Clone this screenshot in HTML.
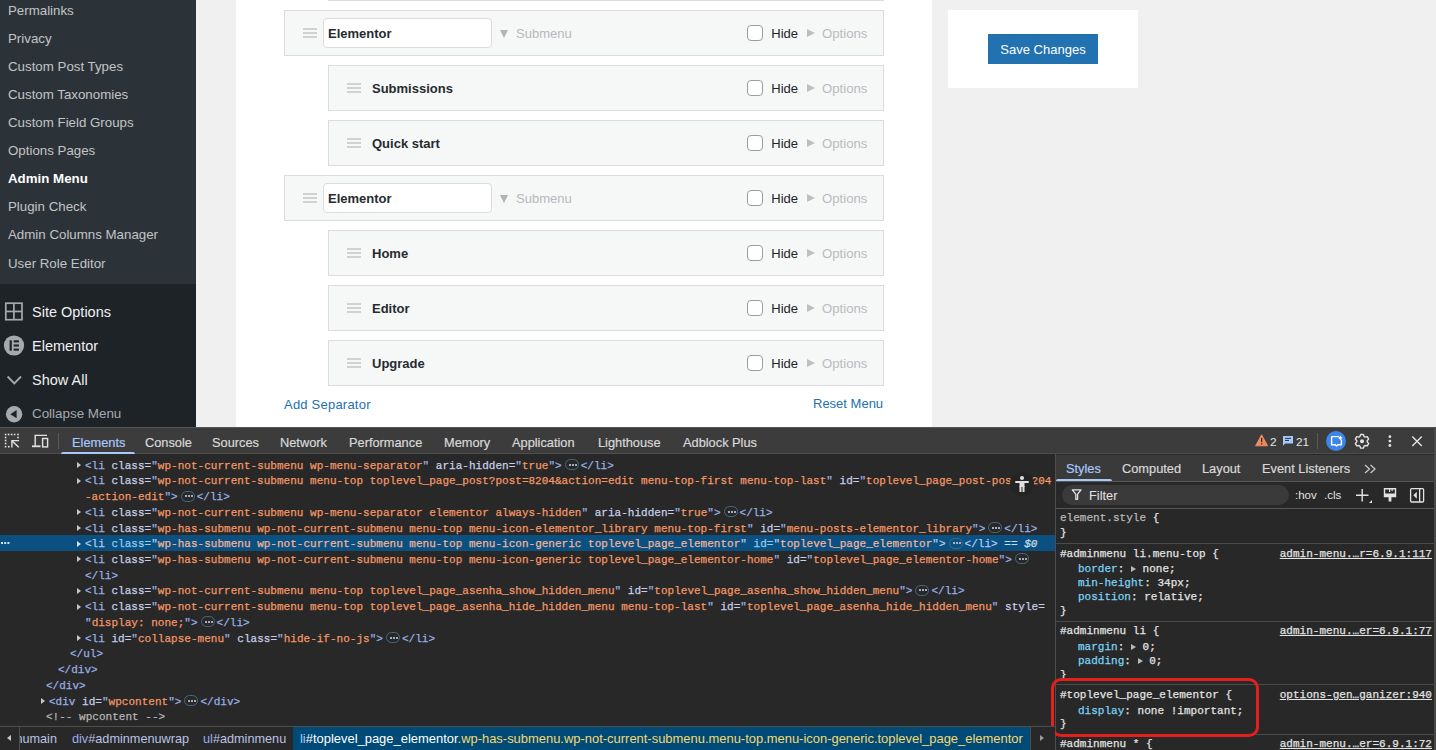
<!DOCTYPE html><html><head><meta charset="utf-8"><style>
*{margin:0;padding:0;box-sizing:border-box}
html,body{width:1436px;height:750px;overflow:hidden;background:#f0f0f1;font-family:"Liberation Sans",sans-serif}
.a{position:absolute;white-space:nowrap}
.sm{position:absolute;left:8px;font-size:13.3px;color:#c3c4c7;line-height:16px;white-space:nowrap}
.sm.cur{color:#fff;font-weight:bold}
.tl{position:absolute;left:32px;font-size:14.5px;color:#f0f0f1;line-height:18px;white-space:nowrap}
.item{position:absolute;height:46px;background:#f6f7f7;border:1px solid #dcdcde}
.handle{position:absolute;top:17px;width:14px;height:10px;border-top:2px solid #d0d1d3;border-bottom:2px solid #d0d1d3}
.handle:after{content:"";position:absolute;left:0;right:0;top:2px;height:2px;background:#d0d1d3}
.name{position:absolute;top:15px;font-size:13px;font-weight:bold;color:#262b30;white-space:nowrap;line-height:16px}
.inp{position:absolute;left:38px;top:7px;width:169px;height:30px;background:#fff;border:1px solid #dcdcde;border-radius:4px}
.inp span{position:absolute;left:4px;top:7px;font-size:13px;font-weight:bold;color:#262b30;line-height:16px}
.sub{position:absolute;top:15px;font-size:13px;color:#b7b9bc;white-space:nowrap;line-height:16px}
.stri{position:absolute;top:18.5px;width:0;height:0;border-top:8px solid #b0b2b4;border-left:4.3px solid transparent;border-right:4.3px solid transparent}
.cb{position:absolute;top:14px;width:16px;height:16px;border:1px solid #9a9ca0;border-radius:4px;background:#fff}
.hide{position:absolute;top:15px;font-size:13px;color:#1d2327;line-height:16px}
.tri{position:absolute;top:18px;width:0;height:0;border-left:8px solid #bdbfc1;border-top:4.2px solid transparent;border-bottom:4.2px solid transparent}
.opt{position:absolute;top:15px;font-size:13.2px;color:#b9bbbe;line-height:16px}
/* devtools */
#dt{position:absolute;left:0;top:427px;width:1436px;height:323px;background:#282828}
.mono{font-family:"Liberation Mono",monospace;font-size:11px}
.ln{position:absolute;white-space:pre;font-family:"Liberation Mono",monospace;font-size:11px;line-height:15.6px;height:15.6px;letter-spacing:0.018px;-webkit-text-stroke:0.25px currentColor}
.tg{color:#98afe4}
.an{color:#c8cfe8}
.av{color:#f29766}
.cm{color:#b4b4b4}
.arr{position:absolute;width:0;height:0;border-left:4.5px solid #c8c8c8;border-top:3.5px solid transparent;border-bottom:3.5px solid transparent}
.ell{display:inline-block;vertical-align:middle;position:relative;top:-1px;width:14px;height:11px;border:1px solid #466a80;border-radius:6px;margin:0 2px 0 3px}
.ell:before{content:"";position:absolute;left:3px;top:3.5px;width:2px;height:2px;background:#d0d8e8;box-shadow:3px 0 0 #d0d8e8,6px 0 0 #d0d8e8;border-radius:1px}
.tab{position:absolute;top:0;line-height:26px;padding-top:1.6px;font-size:12.8px;color:#d8d8d8;white-space:nowrap;-webkit-text-stroke:0.2px currentColor}
.sp{color:#9cdcfe}
.hl .tg{color:#b0c8f0}
.hl .an{color:#90cbf5}
.hl .av{color:#f0b49a}
.hl .arr2{}
.stri2{display:inline-block;width:5px;height:8px;position:relative;vertical-align:middle;top:0px}
.stri2:before{content:'';position:absolute;left:0px;top:1.5px;border-left:5px solid #b8b8b8;border-top:3.5px solid transparent;border-bottom:3.5px solid transparent}
</style></head><body>
<div class="a" style="left:0;top:0;width:196px;height:284px;background:#2c3338"></div>
<div class="a" style="left:0;top:284px;width:196px;height:143px;background:#1d2327"></div>
<div class="sm" style="top:2.6px">Permalinks</div>
<div class="sm" style="top:30.7px">Privacy</div>
<div class="sm" style="top:58.8px">Custom Post Types</div>
<div class="sm" style="top:86.9px">Custom Taxonomies</div>
<div class="sm" style="top:115.0px">Custom Field Groups</div>
<div class="sm" style="top:143.1px">Options Pages</div>
<div class="sm cur" style="top:171.2px">Admin Menu</div>
<div class="sm" style="top:199.3px">Plugin Check</div>
<div class="sm" style="top:227.4px">Admin Columns Manager</div>
<div class="sm" style="top:255.5px">User Role Editor</div>
<div class="tl" style="top:303.0px">Site Options</div>
<div class="tl" style="top:336.7px">Elementor</div>
<div class="tl" style="top:371.0px">Show All</div>
<div class="tl" style="top:405px;color:#a7aaad;font-size:13.4px">Collapse Menu</div>
<svg class="a" style="left:0;top:290px" width="40" height="140" viewBox="0 290 40 140"><g fill="none" stroke="#a7aaad" stroke-width="1.7"><rect x="5.8" y="303.2" width="16.2" height="16.5"/><line x1="13.9" y1="303" x2="13.9" y2="320"/><line x1="5.8" y1="311.45" x2="22" y2="311.45"/></g><circle cx="14" cy="345.5" r="10.1" fill="#a7aaad"/><g fill="#1d2327"><rect x="9.6" y="340.3" width="2.2" height="10.4"/><rect x="13.7" y="340.3" width="5.2" height="2.1"/><rect x="13.7" y="344.45" width="5.2" height="2.1"/><rect x="13.7" y="348.6" width="5.2" height="2.1"/></g><polyline points="7.6,376.5 14.3,383.4 21,376.5" fill="none" stroke="#a7aaad" stroke-width="1.8"/><circle cx="14.1" cy="414.2" r="8.2" fill="#a7aaad"/><polygon points="10.3,414.2 16.6,410.1 16.6,418.3" fill="#1d2327"/></svg>
<div class="a" style="left:236px;top:0;width:696px;height:427px;background:#fff"></div>
<div class="a" style="left:328px;top:-45px;width:556px;height:46px;background:#f6f7f7;border:1px solid #dcdcde"></div>
<div class="item" style="left:284px;top:10px;width:600px">
<div class="handle" style="left:18px"></div>
<div class="inp"><span>Elementor</span></div>
<div class="stri" style="left:215px"></div>
<div class="sub" style="left:231px">Submenu</div>
<div class="cb" style="left:462px"></div>
<div class="hide" style="left:486.29999999999995px">Hide</div>
<div class="tri" style="left:521.5px"></div>
<div class="opt" style="left:537px">Options</div>
</div>
<div class="item" style="left:328px;top:65px;width:556px">
<div class="handle" style="left:18px"></div>
<div class="name" style="left:43px">Submissions</div>
<div class="cb" style="left:418px"></div>
<div class="hide" style="left:442.29999999999995px">Hide</div>
<div class="tri" style="left:477.5px"></div>
<div class="opt" style="left:493px">Options</div>
</div>
<div class="item" style="left:328px;top:120px;width:556px">
<div class="handle" style="left:18px"></div>
<div class="name" style="left:43px">Quick start</div>
<div class="cb" style="left:418px"></div>
<div class="hide" style="left:442.29999999999995px">Hide</div>
<div class="tri" style="left:477.5px"></div>
<div class="opt" style="left:493px">Options</div>
</div>
<div class="item" style="left:284px;top:175px;width:600px">
<div class="handle" style="left:18px"></div>
<div class="inp"><span>Elementor</span></div>
<div class="stri" style="left:215px"></div>
<div class="sub" style="left:231px">Submenu</div>
<div class="cb" style="left:462px"></div>
<div class="hide" style="left:486.29999999999995px">Hide</div>
<div class="tri" style="left:521.5px"></div>
<div class="opt" style="left:537px">Options</div>
</div>
<div class="item" style="left:328px;top:230px;width:556px">
<div class="handle" style="left:18px"></div>
<div class="name" style="left:43px">Home</div>
<div class="cb" style="left:418px"></div>
<div class="hide" style="left:442.29999999999995px">Hide</div>
<div class="tri" style="left:477.5px"></div>
<div class="opt" style="left:493px">Options</div>
</div>
<div class="item" style="left:328px;top:285px;width:556px">
<div class="handle" style="left:18px"></div>
<div class="name" style="left:43px">Editor</div>
<div class="cb" style="left:418px"></div>
<div class="hide" style="left:442.29999999999995px">Hide</div>
<div class="tri" style="left:477.5px"></div>
<div class="opt" style="left:493px">Options</div>
</div>
<div class="item" style="left:328px;top:340px;width:556px">
<div class="handle" style="left:18px"></div>
<div class="name" style="left:43px">Upgrade</div>
<div class="cb" style="left:418px"></div>
<div class="hide" style="left:442.29999999999995px">Hide</div>
<div class="tri" style="left:477.5px"></div>
<div class="opt" style="left:493px">Options</div>
</div>
<div class="a" style="left:948px;top:10px;width:190px;height:78px;background:#fff"></div>
<div class="a" style="left:988px;top:34px;width:110px;height:30px;background:#2271b1;color:#fff;font-size:13px;line-height:32px;text-align:center">Save Changes</div>
<div class="a" style="left:284px;top:397px;font-size:13px;color:#2271b1;line-height:16px;letter-spacing:0.22px">Add Separator</div>
<div class="a" style="left:813px;top:396px;font-size:13px;color:#2271b1;line-height:16px">Reset Menu</div>
<div id="dt"></div>
<div class="a" style="left:0;top:427px;width:1436px;height:27px;background:#3c3c3c;border-top:1px solid #555;border-bottom:1px solid #4e4e4e"></div>
<div class="tab" style="left:72px;top:428px;color:#a8c7fa">Elements</div>
<div class="tab" style="left:145px;top:428px;color:#d8d8d8">Console</div>
<div class="tab" style="left:212px;top:428px;color:#d8d8d8">Sources</div>
<div class="tab" style="left:280px;top:428px;color:#d8d8d8">Network</div>
<div class="tab" style="left:349px;top:428px;color:#d8d8d8">Performance</div>
<div class="tab" style="left:444px;top:428px;color:#d8d8d8">Memory</div>
<div class="tab" style="left:512px;top:428px;color:#d8d8d8">Application</div>
<div class="tab" style="left:598px;top:428px;color:#d8d8d8">Lighthouse</div>
<div class="tab" style="left:683px;top:428px;color:#d8d8d8">Adblock Plus</div>
<div class="a" style="left:61px;top:451.5px;width:74px;height:2.5px;background:#a8c7fa;border-radius:2px 2px 0 0"></div>
<div class="a" style="left:58px;top:433px;width:1px;height:16px;background:#5a5a5a"></div>
<div class="a" style="left:1317px;top:433px;width:1px;height:16px;background:#5a5a5a"></div>
<div class="a" style="left:0;top:535px;width:1055px;height:16px;background:#0a5080"></div>
<div class="a" style="left:0.5px;top:541.8px;width:2.2px;height:2.2px;background:#d0e4f8;box-shadow:3.2px 0 0 #d0e4f8,6.4px 0 0 #d0e4f8"></div>
<div class="arr" style="left:77px;top:461.8px;border-left-color:#c8c8c8"></div>
<div class="ln " style="left:85px;top:458.5px"><span class="tg">&lt;li</span> <span class="an">class</span><span class="an">=</span><span class="tg">&quot;</span><span class="av">wp-not-current-submenu wp-menu-separator</span><span class="tg">&quot;</span> <span class="an">aria-hidden</span><span class="an">=</span><span class="tg">&quot;</span><span class="av">true</span><span class="tg">&quot;</span><span class="tg">&gt;</span><span class="ell"></span><span class="tg">&lt;/li&gt;</span></div>
<div class="arr" style="left:77px;top:477.5px;border-left-color:#c8c8c8"></div>
<div class="ln " style="left:85px;top:474.2px"><span class="tg">&lt;li</span> <span class="an">class=</span><span class="tg">&quot;</span><span class="av">wp-not-current-submenu menu-top toplevel_page_post?post=8204&amp;action=edit menu-top-first menu-top-last</span><span class="tg">&quot;</span> <span class="an">id=</span><span class="tg">&quot;</span><span class="av">toplevel_page_post-post=8204</span></div>
<div class="ln " style="left:85px;top:490.0px"><span class="av">-action-edit</span><span class="tg">&quot;&gt;</span><span class="ell"></span><span class="tg">&lt;/li&gt;</span></div>
<div class="arr" style="left:77px;top:509.0px;border-left-color:#c8c8c8"></div>
<div class="ln " style="left:85px;top:505.7px"><span class="tg">&lt;li</span> <span class="an">class</span><span class="an">=</span><span class="tg">&quot;</span><span class="av">wp-not-current-submenu wp-menu-separator elementor always-hidden</span><span class="tg">&quot;</span> <span class="an">aria-hidden</span><span class="an">=</span><span class="tg">&quot;</span><span class="av">true</span><span class="tg">&quot;</span><span class="tg">&gt;</span><span class="ell"></span><span class="tg">&lt;/li&gt;</span></div>
<div class="arr" style="left:77px;top:524.8px;border-left-color:#c8c8c8"></div>
<div class="ln " style="left:85px;top:521.5px"><span class="tg">&lt;li</span> <span class="an">class</span><span class="an">=</span><span class="tg">&quot;</span><span class="av">wp-has-submenu wp-not-current-submenu menu-top menu-icon-elementor_library menu-top-first</span><span class="tg">&quot;</span> <span class="an">id</span><span class="an">=</span><span class="tg">&quot;</span><span class="av">menu-posts-elementor_library</span><span class="tg">&quot;</span><span class="tg">&gt;</span><span class="ell"></span><span class="tg">&lt;/li&gt;</span></div>
<div class="arr" style="left:77px;top:540.5px;border-left-color:#cfe0f0"></div>
<div class="ln hl" style="left:85px;top:537.2px"><span class="tg">&lt;li</span> <span class="an">class</span><span class="an">=</span><span class="tg">&quot;</span><span class="av">wp-has-submenu wp-not-current-submenu menu-top menu-icon-generic toplevel_page_elementor</span><span class="tg">&quot;</span> <span class="an">id</span><span class="an">=</span><span class="tg">&quot;</span><span class="av">toplevel_page_elementor</span><span class="tg">&quot;</span><span class="tg">&gt;</span><span class="ell"></span><span class="tg">&lt;/li&gt;</span><span style="color:#c8d8e8"> == <i>$0</i></span></div>
<div class="arr" style="left:77px;top:556.2px;border-left-color:#c8c8c8"></div>
<div class="ln " style="left:85px;top:552.9px"><span class="tg">&lt;li</span> <span class="an">class</span><span class="an">=</span><span class="tg">&quot;</span><span class="av">wp-has-submenu wp-not-current-submenu menu-top menu-icon-generic toplevel_page_elementor-home</span><span class="tg">&quot;</span> <span class="an">id</span><span class="an">=</span><span class="tg">&quot;</span><span class="av">toplevel_page_elementor-home</span><span class="tg">&quot;</span><span class="tg">&gt;</span><span class="ell"></span></div>
<div class="ln " style="left:85px;top:568.7px"><span class="tg">&lt;/li&gt;</span></div>
<div class="arr" style="left:77px;top:587.7px;border-left-color:#c8c8c8"></div>
<div class="ln " style="left:85px;top:584.4px"><span class="tg">&lt;li</span> <span class="an">class</span><span class="an">=</span><span class="tg">&quot;</span><span class="av">wp-not-current-submenu menu-top toplevel_page_asenha_show_hidden_menu</span><span class="tg">&quot;</span> <span class="an">id</span><span class="an">=</span><span class="tg">&quot;</span><span class="av">toplevel_page_asenha_show_hidden_menu</span><span class="tg">&quot;</span><span class="tg">&gt;</span><span class="ell"></span><span class="tg">&lt;/li&gt;</span></div>
<div class="arr" style="left:77px;top:603.5px;border-left-color:#c8c8c8"></div>
<div class="ln " style="left:85px;top:600.2px"><span class="tg">&lt;li</span> <span class="an">class=</span><span class="tg">&quot;</span><span class="av">wp-not-current-submenu menu-top toplevel_page_asenha_hide_hidden_menu menu-top-last</span><span class="tg">&quot;</span> <span class="an">id=</span><span class="tg">&quot;</span><span class="av">toplevel_page_asenha_hide_hidden_menu</span><span class="tg">&quot;</span> <span class="an">style=</span></div>
<div class="ln " style="left:85px;top:615.9px"><span class="tg">&quot;</span><span class="av">display: none;</span><span class="tg">&quot;&gt;</span><span class="ell"></span><span class="tg">&lt;/li&gt;</span></div>
<div class="arr" style="left:77px;top:634.9px;border-left-color:#c8c8c8"></div>
<div class="ln " style="left:85px;top:631.6px"><span class="tg">&lt;li</span> <span class="an">id</span><span class="an">=</span><span class="tg">&quot;</span><span class="av">collapse-menu</span><span class="tg">&quot;</span> <span class="an">class</span><span class="an">=</span><span class="tg">&quot;</span><span class="av">hide-if-no-js</span><span class="tg">&quot;</span><span class="tg">&gt;</span><span class="ell"></span><span class="tg">&lt;/li&gt;</span></div>
<div class="ln " style="left:70px;top:647.4px"><span class="tg">&lt;/ul&gt;</span></div>
<div class="ln " style="left:58px;top:663.1px"><span class="tg">&lt;/div&gt;</span></div>
<div class="ln " style="left:46px;top:678.9px"><span class="tg">&lt;/div&gt;</span></div>
<div class="arr" style="left:41px;top:697.9px;border-left-color:#c8c8c8"></div>
<div class="ln " style="left:49px;top:694.6px"><span class="tg">&lt;div</span> <span class="an">id=</span><span class="tg">&quot;</span><span class="av">wpcontent</span><span class="tg">&quot;&gt;</span><span class="ell"></span><span class="tg">&lt;/div&gt;</span></div>
<div class="ln " style="left:46px;top:710.3px"><span class="cm">&lt;!-- wpcontent --&gt;</span></div>
<div class="a" style="left:1010px;top:472px;width:24px;height:24px;border-radius:12px;background:#242424"></div>
<svg class="a" style="left:1013px;top:475px" width="18" height="18" viewBox="0 0 18 18"><g fill="#e0e0e0"><circle cx="9" cy="3" r="2"/><rect x="2" y="6" width="14" height="2" rx="1"/><rect x="6.5" y="6" width="5" height="6"/><rect x="6.5" y="11" width="2" height="6"/><rect x="9.5" y="11" width="2" height="6"/></g></svg>
<div class="a" style="left:1055px;top:454px;width:1px;height:296px;background:#4e4e4e"></div>
<div class="a" style="left:1056px;top:455px;width:380px;height:27px;background:#3a3a3a"></div>
<div class="tab" style="left:1066px;top:456.4px;padding-top:0;color:#a8c7fa">Styles</div>
<div class="tab" style="left:1122px;top:456.4px;padding-top:0;color:#d8d8d8">Computed</div>
<div class="tab" style="left:1202px;top:456.4px;padding-top:0;color:#d8d8d8">Layout</div>
<div class="tab" style="left:1262px;top:456.4px;padding-top:0;color:#d8d8d8">Event Listeners</div>
<div class="a" style="left:1056px;top:479px;width:56px;height:3px;background:#a8c7fa;border-radius:2px 2px 0 0"></div>
<div class="a" style="left:1056px;top:481px;width:380px;height:28px;background:#282828;border-top:1px solid #575757;border-bottom:1px solid #575757"></div>
<div class="a" style="left:1061.5px;top:485px;width:227px;height:20px;background:#3a3a3a;border-radius:10px"></div>
<div class="a" style="left:1089px;top:487px;font-size:12.8px;line-height:17px;color:#e3e3e3">Filter</div>
<div class="a" style="left:1295px;top:487px;font-size:11.5px;line-height:17px;color:#e3e3e3">:hov</div>
<div class="a" style="left:1324px;top:487px;font-size:11.5px;line-height:17px;color:#e3e3e3">.cls</div>
<div class="ln" style="left:1060px;top:511.0px;color:#e3e3e3"><span style="color:#b8b8b8">element.style</span> {</div>
<div class="ln" style="left:1060px;top:525.5px;color:#e3e3e3">}</div>
<div class="a" style="left:1056px;top:543px;width:380px;height:1px;background:#4a4a4a"></div>
<div class="ln" style="left:1060px;top:546.5px;color:#e3e3e3">#adminmenu li.menu-top {</div>
<div class="ln" style="left:1078px;top:561.5px;color:#e3e3e3"><span style="color:#7cd4f5">border</span>: <span class="stri2"></span> none;</div>
<div class="ln" style="left:1078px;top:575.5px;color:#e3e3e3"><span style="color:#7cd4f5">min-height</span>: 34px;</div>
<div class="ln" style="left:1078px;top:589.5px;color:#e3e3e3"><span style="color:#7cd4f5">position</span>: relative;</div>
<div class="ln" style="left:1060px;top:603.5px;color:#e3e3e3">}</div>
<div class="a" style="left:1056px;top:621px;width:380px;height:1px;background:#4a4a4a"></div>
<div class="ln" style="left:1060px;top:623.5px;color:#e3e3e3">#adminmenu li {</div>
<div class="ln" style="left:1078px;top:639.5px;color:#e3e3e3"><span style="color:#7cd4f5">margin</span>: <span class="stri2"></span> 0;</div>
<div class="ln" style="left:1078px;top:653.5px;color:#e3e3e3"><span style="color:#7cd4f5">padding</span>: <span class="stri2"></span> 0;</div>
<div class="ln" style="left:1060px;top:667.5px;color:#e3e3e3">}</div>
<div class="a" style="left:1056px;top:684px;width:380px;height:1px;background:#4a4a4a"></div>
<div class="ln" style="left:1060px;top:687.5px;color:#e3e3e3">#toplevel_page_elementor {</div>
<div class="ln" style="left:1078px;top:703.5px;color:#e3e3e3"><span style="color:#7cd4f5">display</span>: none !important;</div>
<div class="ln" style="left:1060px;top:716.5px;color:#e3e3e3">}</div>
<div class="a" style="left:1056px;top:734px;width:380px;height:1px;background:#4a4a4a"></div>
<div class="ln" style="left:1060px;top:736.5px;color:#e3e3e3">#adminmenu * {</div>
<div class="ln" style="right:4px;top:546.5px;color:#e3e3e3;text-decoration:underline">admin-menu.…r=6.9.1:117</div>
<div class="ln" style="right:4px;top:623.5px;color:#e3e3e3;text-decoration:underline">admin-menu.…er=6.9.1:77</div>
<div class="ln" style="right:4px;top:687.5px;color:#e3e3e3;text-decoration:underline">options-gen…ganizer:940</div>
<div class="ln" style="right:4px;top:736.5px;color:#e3e3e3;text-decoration:underline">admin-menu.…er=6.9.1:72</div>
<div class="a" style="left:1050.5px;top:678px;width:208px;height:59px;border:3.5px solid #e3201c;border-radius:10px"></div>
<div class="a" style="left:0;top:726px;width:1055px;height:24px;background:#282828;border-top:1px solid #4e4e4e"></div>
<div class="a" style="left:293px;top:727px;width:737px;height:23px;background:#004a77"></div>
<div class="a" style="left:0;top:727px;width:20px;height:23px;background:#282828;border-right:1px solid #4e4e4e;z-index:2"></div>
<div class="a" style="left:7px;top:735px;width:0;height:0;border-right:4px solid #c8c8c8;border-top:3.5px solid transparent;border-bottom:3.5px solid transparent;z-index:3"></div>
<div class="a" style="left:1030px;top:727px;width:25px;height:23px;background:#282828;border-left:1px solid #4e4e4e"></div>
<div class="a" style="left:1040px;top:735px;width:0;height:0;border-left:4px solid #9a9a9a;border-top:3.5px solid transparent;border-bottom:3.5px solid transparent"></div>
<div class="a" style="right:1379px;top:730.5px;font-size:12.7px;line-height:16px;color:#b9c3e6"><span style="color:#98afe4">div</span>#adminmenumain</div>
<div class="a" style="left:72px;top:730.5px;font-size:12.7px;line-height:16px"><span style="color:#98afe4">div</span><span style="color:#b9c3e6">#adminmenuwrap</span></div>
<div class="a" style="left:203px;top:730.5px;font-size:12.7px;line-height:16px"><span style="color:#98afe4">ul</span><span style="color:#b9c3e6">#adminmenu</span></div>
<div class="a" style="left:300px;top:731px;font-size:12.94px;line-height:16px"><span style="color:#a8c7fa">li</span><span style="color:#fff">#toplevel_page_elementor</span><span style="color:#f5d870">.wp-has-submenu.wp-not-current-submenu.menu-top.menu-icon-generic.toplevel_page_elementor</span></div>
<svg class="a" style="left:0;top:428px" width="60" height="26" viewBox="0 0 60 26"><g fill="#e3e3e3"><rect x="4.8" y="5.7" width="1.6" height="1.6"/><rect x="7.8" y="5.7" width="1.6" height="1.6"/><rect x="10.8" y="5.7" width="1.6" height="1.6"/><rect x="13.8" y="5.7" width="1.6" height="1.6"/><rect x="17.2" y="5.7" width="1.6" height="1.6"/><rect x="4.8" y="8.7" width="1.6" height="1.6"/><rect x="4.8" y="11.7" width="1.6" height="1.6"/><rect x="4.8" y="14.7" width="1.6" height="1.6"/><rect x="4.8" y="17.9" width="1.6" height="1.6"/><rect x="8.0" y="17.9" width="1.6" height="1.6"/><rect x="17.2" y="8.7" width="1.6" height="1.6"/></g><g fill="none" stroke="#e3e3e3" stroke-width="1.4"><path d="M11.9 19.5V12.6H19"/><path d="M12.2 12.9L18.7 19.3"/></g><g fill="none" stroke="#e3e3e3" stroke-width="1.4"><path d="M35.2 17.8V7.4H47"/><rect x="42.6" y="10.5" width="5" height="8.4"/></g><rect x="32" y="17.4" width="8.5" height="1.8" fill="#e3e3e3"/></svg>
<svg class="a" style="left:1250px;top:428px" width="186" height="26" viewBox="0 0 186 26"><path d="M11.6 6.8L17.6 17.8H5.6Z" fill="#ee8a5e" stroke="#ee8a5e" stroke-width="1" stroke-linejoin="round"/><rect x="11" y="10" width="1.3" height="4.2" fill="#3a2a22"/><rect x="11" y="15.2" width="1.3" height="1.3" fill="#3a2a22"/><path d="M33 8H43V15.5H35.2L33 17.8Z" fill="#a8c7fa"/><g fill="#2a3e5e"><rect x="35" y="9.8" width="6" height="1.1"/><rect x="35" y="11.9" width="4" height="1.1"/></g><circle cx="86" cy="13" r="10" fill="#3d85e6"/><path d="M81.6 8.6H88.8M91.4 11.4V16.8H87.8L86.5 18.1L85.2 16.8H81.6V8.6" fill="none" stroke="#fff" stroke-width="1.4" stroke-linejoin="round"/><path d="M90.3 7.6L91.2 9L92.6 9.9L91.2 10.8L90.3 12.2L89.4 10.8L88 9.9L89.4 9Z" fill="#fff"/></svg>
<div class="a" style="left:1270px;top:434.5px;font-size:11.8px;line-height:14px;color:#e3e3e3">2</div>
<div class="a" style="left:1296px;top:434.5px;font-size:11.8px;line-height:14px;color:#e3e3e3">21</div>
<svg class="a" style="left:0;top:0" width="1436" height="750" viewBox="0 0 1436 750" style="pointer-events:none"><polygon points="1368.64,443.53 1367.25,445.93 1365.05,445.51 1364.12,446.05 1363.39,448.16 1360.61,448.16 1359.88,446.05 1358.95,445.51 1356.75,445.93 1355.36,443.53 1356.83,441.84 1356.83,440.76 1355.36,439.07 1356.75,436.67 1358.95,437.09 1359.88,436.55 1360.61,434.44 1363.39,434.44 1364.12,436.55 1365.05,437.09 1367.25,436.67 1368.64,439.07 1367.17,440.76 1367.17,441.84" fill="none" stroke="#e3e3e3" stroke-width="1.4" stroke-linejoin="round"/><circle cx="1362" cy="441.3" r="2.0" fill="#e3e3e3"/><g fill="#e3e3e3"><circle cx="1389.9" cy="436.7" r="1.4"/><circle cx="1389.9" cy="441.1" r="1.4"/><circle cx="1389.9" cy="445.5" r="1.4"/></g><path d="M1412.3 436.4L1421.8 445.9M1421.8 436.4L1412.3 445.9" stroke="#e3e3e3" stroke-width="1.4"/><path d="M1365 465L1369.5 469L1365 473M1370.5 465L1375 469L1370.5 473" fill="none" stroke="#c8c8c8" stroke-width="1.3"/><path d="M1072.3 489.8H1081L1077.6 494.2V499.3H1075.8V494.2Z" fill="none" stroke="#e3e3e3" stroke-width="1.3" stroke-linejoin="round"/><path d="M1356 495.2H1368.5M1362.2 489V501.5" stroke="#e3e3e3" stroke-width="1.4"/><path d="M1372 500L1372 503H1369Z" fill="#e3e3e3"/><path d="M1384.5 488.8H1395.5V496.5H1384.5Z" fill="none" stroke="#e3e3e3" stroke-width="1.4"/><rect x="1384" y="493.5" width="12" height="3" fill="#e3e3e3"/><rect x="1388.6" y="496.5" width="2.8" height="5" fill="#e3e3e3"/><rect x="1389" y="489" width="1.2" height="3" fill="#e3e3e3"/><rect x="1391.5" y="489" width="1.2" height="2.2" fill="#e3e3e3"/><rect x="1410.6" y="488.7" width="13" height="13.3" rx="1" fill="none" stroke="#e3e3e3" stroke-width="1.3"/><rect x="1419" y="489" width="1.3" height="12.8" fill="#e3e3e3"/><path d="M1416.8 491.8V498.8L1413.3 495.3Z" fill="#e3e3e3"/></svg>
<div class="a" style="left:1434px;top:427px;width:2px;height:323px;background:#4a4a4a"></div>
</body></html>
